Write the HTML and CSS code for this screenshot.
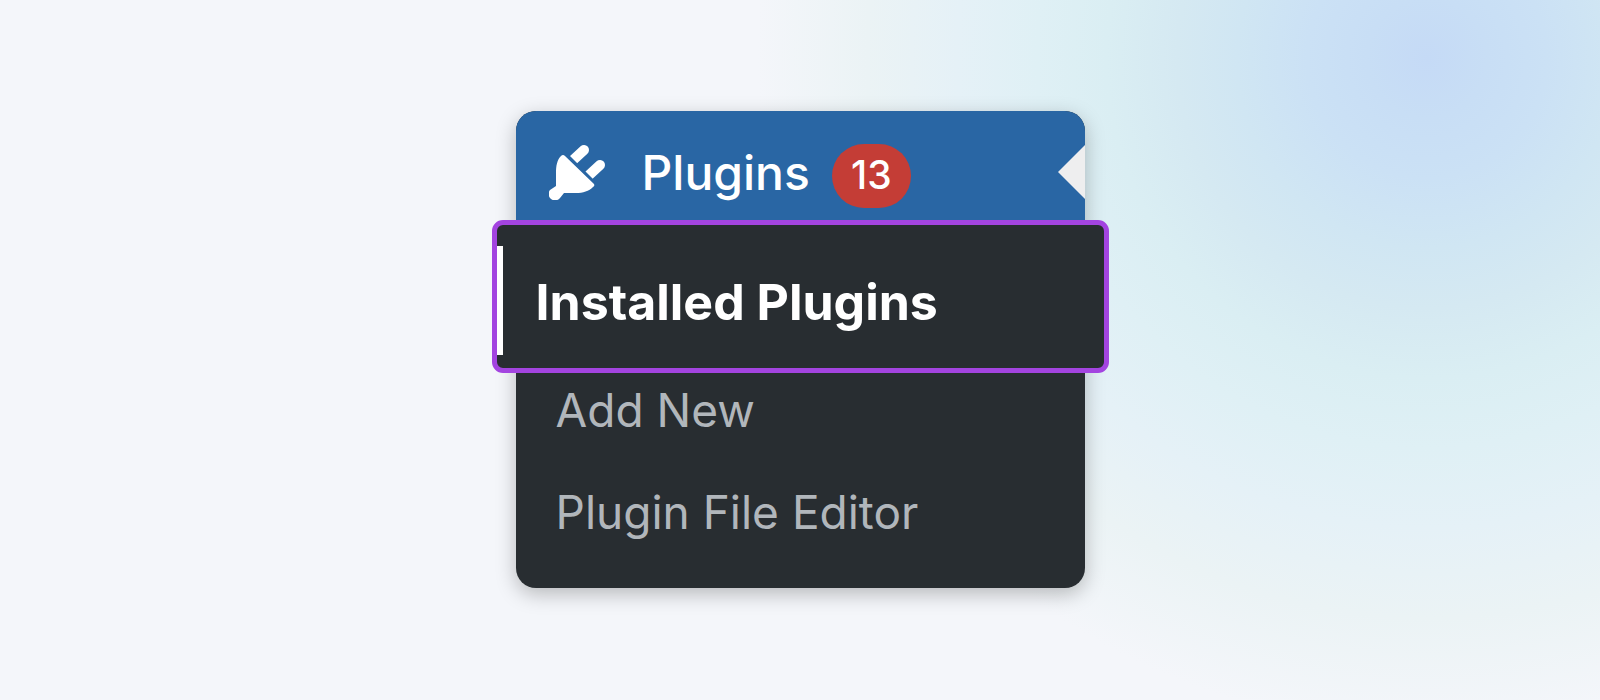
FILE: index.html
```html
<!DOCTYPE html>
<html lang="en">
    <head>
        <meta charset="utf-8">
        <title>Plugins</title>
        <meta name="viewport" content="width=device-width, initial-scale=1">
        <link rel="stylesheet" href="styles.css">
    </head>
    <body>
        <nav class="menu">
            <a class="menu-top" href="#plugins">
                <svg class="plug" viewBox="0 0 56 56" aria-hidden="true">
                    <path d="M22 18L35 6M38 33L51 21" stroke="#fff" stroke-width="10" stroke-linecap="round"/>
                    <path d="M15 6L50 41L44 47L9 12Z" fill="#2966a4"/>
                    <path d="M12 12Q14 10 16 12L45 40Q46 42 44 43C40 47 34 49 27 49H15L11 54A6 6 0 0 1 1 46L7 42V29C7 22 8 16 12 12Z" fill="#fff"/>
                </svg>
                <span>Plugins</span>
                <span class="count">13</span>
            </a>
            <ul class="submenu">
                <li class="current"><a href="#installed">Installed Plugins</a></li>
                <li><a href="#add-new">Add New</a></li>
                <li><a href="#editor">Plugin File Editor</a></li>
            </ul>
        </nav>
    </body>
</html>
```
FILE: styles.css
```css
body {
    margin: 0;
    min-height: 100vh;
    box-sizing: border-box;
    padding-bottom: 1px;
    display: flex;
    align-items: center;
    justify-content: center;
    font-family: Inter, "Liberation Sans", sans-serif;
    background: #f4f6fa radial-gradient(circle 670px at 1427px 58px, #c5daf6 0, #c8def5 60px, #cbe1f5 120px, #d0e6f3 190px, #d5e9f2 250px, #daeef3 320px, #dff0f5 390px, #e5f1f7 470px, #ebf3f5 560px, #f4f6fa 670px) no-repeat;
}

a {
    color: inherit;
    text-decoration: none;
}

.menu {
    width: 569px;
    border-radius: 20px;
    background: #282d31;
    box-shadow: 0 6px 20px rgba(0, 0, 0, 0.25);
}

/* top item */
.menu-top {
    position: relative;
    display: flex;
    align-items: flex-start;
    height: 109px;
    padding: 33px 0 0 33px;
    box-sizing: border-box;
    border-radius: 20px 20px 0 0;
    background: #2966a4;
    color: #fff;
    font-size: 48px;
    font-weight: 500;
    line-height: 58px;
}

.plug {
    width: 56px;
    height: 56px;
    margin-right: 37px;
}

.count {
    margin-left: 22px;
    min-width: 79px;
    border-radius: 32px;
    background: #c43d36;
    font-size: 39px;
    line-height: 62px;
    padding-bottom: 2px;
    text-align: center;
}

/* arrow pointing at the open menu */
.menu-top::after {
    content: "";
    position: absolute;
    right: 0;
    top: 34px;
    border: 27px solid transparent;
    border-left: 0;
    border-right-color: #eeeeef;
}

.submenu {
    margin: 0;
    padding: 0 0 39px;
    list-style: none;
    display: flex;
    flex-direction: column;
    gap: 28px;
    color: #b1b6bb;
    font-size: 46px;
    line-height: 74px;
}

.submenu li {
    padding-left: 40px;
}

.submenu .current {
    display: flex;
    align-items: flex-start;
    height: 153px;
    box-sizing: border-box;
    margin: 0 -24px -28px;
    padding: 21px 0 0;
    border: 5px solid #a344e0;
    border-radius: 11px;
    background: #282d31;
    color: #fff;
    font-size: 50px;
    font-weight: 700;
}

.current a {
    border-left: 6px solid #fff;
    padding: 4px 0 0 33px;
    line-height: 105px;
}
```
